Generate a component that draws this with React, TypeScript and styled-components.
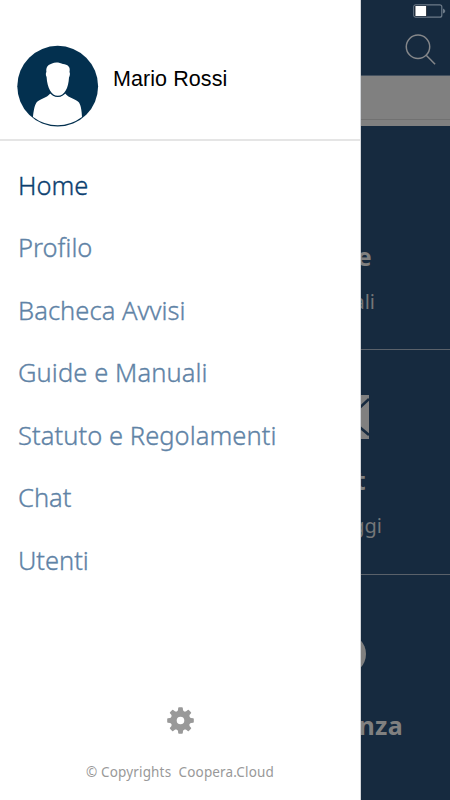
import React from "react";
import styled, { createGlobalStyle } from "styled-components";

const GlobalStyle = createGlobalStyle`
  *, *::before, *::after { box-sizing: border-box; }
  body { margin: 0; background: #fff; }
`;

const uiFont = `"Noto Sans", "Open Sans", sans-serif`;

const Screen = styled.div`
  display: flex;
  width: 450px;
  height: 800px;
  overflow: hidden;
  font-family: ${uiFont};
`;

const Drawer = styled.aside`
  display: flex;
  flex-direction: column;
  flex: 0 0 361px;
  background: #fff;
  border-right: 1px solid #d3d6da;
`;

const ProfileHeader = styled.header`
  display: flex;
  height: 141px;
  padding: 45px 0 0 17px;
  gap: 14px;
  border-bottom: 2px solid #e5e5e5;
`;

const Avatar = styled.svg`
  flex: none;
  width: 82px;
  height: 82px;
`;

const UserName = styled.div`
  padding-top: 22px;
  font: 21.5px/24px "Liberation Sans", Arial, sans-serif;
  letter-spacing: 0.08px;
  color: #000;
  white-space: nowrap;
`;

const Menu = styled.nav`
  display: flex;
  flex-direction: column;
  padding: 13px 0 0 18px;
`;

const MenuItem = styled.a<{ $active?: boolean; $spacing: number }>`
  height: 62.45px;
  line-height: 62.45px;
  font-size: 25.5px;
  font-weight: 300;
  -webkit-text-stroke: 0.35px currentColor;
  letter-spacing: ${(p) => p.$spacing}px;
  color: ${(p) => (p.$active ? "#0c3f70" : "#6083a6")};
  white-space: nowrap;
`;

const DrawerFooter = styled.footer`
  display: flex;
  flex-direction: column;
  align-items: center;
  margin-top: auto;
  height: 93px;
`;

const GearIcon = styled.svg`
  width: 27px;
  height: 27px;
`;

const Copyright = styled.div`
  margin-top: 28px;
  font-size: 13.5px;
  line-height: 20px;
  letter-spacing: 0.15px;
  color: #999;
  white-space: pre;
`;

const Content = styled.main`
  display: flex;
  flex-direction: column;
  flex: 1;
  min-width: 0;
  overflow: hidden;
  background: #162a3f;
`;

const TopBar = styled.div`
  display: flex;
  flex-direction: column;
  align-items: flex-end;
  flex: 0 0 76px;
  padding-top: 4px;
  border-bottom: 1px solid #44515f;
`;

const Battery = styled.svg`
  width: 33px;
  height: 14px;
  margin-right: 4px;
`;

const SearchIcon = styled.svg`
  width: 32px;
  height: 32px;
  margin: 16px 14px 0 0;
`;

const Strip = styled.div`
  flex: 0 0 50px;
  padding-top: 43px;
  background: #808080;
`;

const StripLine = styled.div`
  height: 1px;
  background: #717171;
`;

const Tile = styled.section<{ $height: number; $line?: boolean }>`
  display: flex;
  flex-direction: column;
  align-items: flex-end;
  flex: 0 0 ${(p) => p.$height}px;
  overflow: hidden;
  border-bottom: ${(p) => (p.$line ? "1px solid #5a616a" : "none")};
`;

const TileIcon = styled.svg<{ $top: number; $right: number }>`
  flex: none;
  margin: ${(p) => p.$top}px ${(p) => p.$right}px 0 0;
`;

const TileTitle = styled.div<{ $top: number; $right: number }>`
  margin: ${(p) => p.$top}px ${(p) => p.$right}px 0 0;
  font-size: 25px;
  font-weight: 700;
  line-height: 34px;
  letter-spacing: 0.3px;
  color: #808080;
`;

const TileText = styled.div<{ $right: number }>`
  margin: 15px ${(p) => p.$right}px 0 0;
  font-size: 20px;
  line-height: 28px;
  color: #747678;
`;

const items = [
  { label: "Home", spacing: 0, active: true },
  { label: "Profilo", spacing: 0 },
  { label: "Bacheca Avvisi", spacing: 0.05 },
  { label: "Guide e Manuali", spacing: 0.1 },
  { label: "Statuto e Regolamenti", spacing: 0.06 },
  { label: "Chat", spacing: 0 },
  { label: "Utenti", spacing: -0.05 },
];

export default function App() {
  return (
    <>
      <GlobalStyle />
      <Screen>
        <Drawer>
          <ProfileHeader>
            <Avatar viewBox="0 0 82 82">
              <circle cx="40.7" cy="41.2" r="40.4" fill="#03304f" />
              <path
                d="M16 72 C16.5 67 17.2 61 19.5 57.5 C21.5 54.5 30 53 33.2 48.5 Q40.7 54.5 48.2 48.5 C51.5 53 60 54.5 62 57.5 C64.2 61 64.8 67 65 72 Q54 80.2 40.7 80.2 Q27 80.2 16 72Z"
                fill="#fff"
              />
              <path
                d="M29.6 32 C28.5 30 28.8 27.5 29.4 27 C28.6 21 32 19.5 35 18.4 C38.5 16.6 43 17.6 46 19 C50.5 19.5 53.8 21.5 52.5 27 C53.4 28.5 52.8 31 52 32.5 C51.5 43 47.5 50.8 40.8 50.8 C34.5 50.8 30.2 43 29.6 32Z"
                fill="#fff"
                stroke="#03304f"
                strokeWidth="2.4"
                paintOrder="stroke"
              />
            </Avatar>
            <UserName>Mario Rossi</UserName>
          </ProfileHeader>
          <Menu>
            {items.map((item) => (
              <MenuItem key={item.label} $active={item.active} $spacing={item.spacing}>
                {item.label}
              </MenuItem>
            ))}
          </Menu>
          <DrawerFooter>
            <GearIcon viewBox="-13.5 -13.5 27 27" fill="none" stroke="#999">
              <circle r="6.8" strokeWidth="6" />
              {[0, 45, 90, 135, 180, 225, 270, 315].map((angle) => (
                <path
                  key={angle}
                  transform={`rotate(${angle})`}
                  d="M-3.6 -8.5 L-2.5 -10.5 L-2.3 -12.6 Q-2.2 -13.3 -1.5 -13.3 L1.5 -13.3 Q2.2 -13.3 2.3 -12.6 L2.5 -10.5 L3.6 -8.5Z"
                  fill="#999"
                  stroke="none"
                />
              ))}
            </GearIcon>
            <Copyright>{"© Copyrights  Coopera.Cloud"}</Copyright>
          </DrawerFooter>
        </Drawer>
        <Content>
          <TopBar>
            <Battery viewBox="0 0 33 14">
              <rect x="0.8" y="0.8" width="28" height="12.4" rx="2" fill="none" stroke="#6d7b89" strokeWidth="1.2" />
              <rect x="1.6" y="1.8" width="12.4" height="10.4" fill="#030c17" />
              <rect x="2.4" y="2" width="10.8" height="10" fill="#fff" />
              <path d="M30 4.5 Q32.3 5.5 32.3 7 Q32.3 8.5 30 9.5Z" fill="#6d7b89" />
            </Battery>
            <SearchIcon viewBox="0 0 32 32" fill="none" stroke="#85878a" strokeWidth="1.5">
              <circle cx="14" cy="12.7" r="11.7" />
              <path d="M22.2 21.2 L31.1 30.2" />
            </SearchIcon>
          </TopBar>
          <Strip>
            <StripLine />
          </Strip>
          <Tile $height={224} $line>
            <TileTitle $top={113} $right={78}>e</TileTitle>
            <TileText $right={75}>ali</TileText>
          </Tile>
          <Tile $height={225} $line>
            <TileIcon $top={45} $right={81} width="56" height="44" viewBox="0 0 56 44">
              <rect width="56" height="44" fill="#808080" />
              <path
                d="M0 4 L28 30 L56 4 M0 40 L19 24 M56 40 L37 24"
                fill="none"
                stroke="#162a3f"
                strokeWidth="2.6"
              />
            </TileIcon>
            <TileTitle $top={24} $right={84}>t</TileTitle>
            <TileText $right={68}>ggi</TileText>
          </Tile>
          <Tile $height={225}>
            <TileIcon $top={59} $right={84} width="40" height="40" viewBox="0 0 40 40">
              <circle cx="20" cy="20" r="20" fill="#808080" />
            </TileIcon>
            <TileTitle $top={34} $right={47}>nza</TileTitle>
          </Tile>
        </Content>
      </Screen>
    </>
  );
}
